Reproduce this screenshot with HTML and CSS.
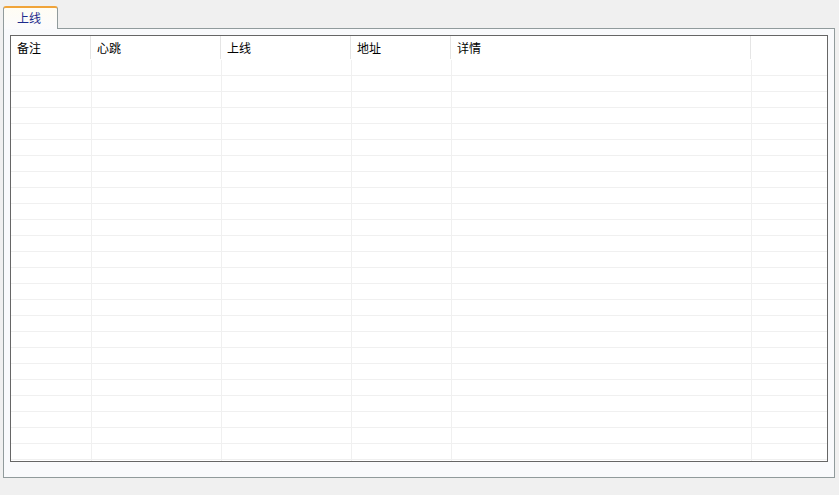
FILE: index.html
```html
<!DOCTYPE html>
<html lang="zh-CN">
<head>
  <meta charset="UTF-8">
  <title>上线</title>
  <link rel="stylesheet" href="styles.css">
</head>
<body>
  <div class="tabs">
    <div class="tab">上线</div>
  </div>

  <div class="panel">
    <div class="listview">
      <div class="header">
        <div class="col">备注</div>
        <div class="col">心跳</div>
        <div class="col">上线</div>
        <div class="col">地址</div>
        <div class="col">详情</div>
        <div class="col last"></div>
      </div>
      <!-- empty list: only the grid lines -->
      <div class="rows">
        <div class="cell"></div>
        <div class="cell"></div>
        <div class="cell"></div>
        <div class="cell"></div>
        <div class="cell"></div>
        <div class="cell last"></div>
      </div>
    </div>
  </div>
</body>
</html>
```

FILE: styles.css
```css
body {
  margin: 0;
  background: #f0f0f0;
  font-family: "Noto Sans CJK SC", "DejaVu Sans", sans-serif;
  font-size: 12px;
  color: #000;
}
.tabs {
  padding: 6px 0 0 3px;
  height: 22px;
  position: relative;
  z-index: 1;
}
.tab {
  width: 40px;
  height: 21px;
  padding-left: 13px;
  border: 1px solid #919b9c;
  border-top: 2px solid #f0a43a;
  border-bottom: none;
  border-radius: 3px 3px 0 0;
  background: linear-gradient(#fffdf4, #fbfbfd);
  color: #1c2a8c;
  line-height: 20px;
}
.panel {
  margin-left: 3px;
  width: 832px;
  height: 450px;
  border: 1px solid #919b9c;
  background: #f9fafc;
  padding: 6px 6px 15px 6px;
  box-sizing: border-box;
}
.listview {
  height: 427px;
  border: 1px solid #666;
  background: #fff;
  box-sizing: border-box;
  display: flex;
  flex-direction: column;
}
.header {
  display: grid;
  grid-template-columns: 80px 130px 130px 100px 300px 1fr;
  height: 24px;
}
.col {
  border-right: 1px solid #e5e5e5;
  height: 23px;
  padding-left: 6px;
  line-height: 24px;
}
.col.last {
  border-right: none;
}
.rows {
  flex: 1;
  display: grid;
  grid-template-columns: 81px 130px 130px 100px 300px 1fr;
  background: repeating-linear-gradient(#fff 0 15px, #f0f0f0 15px 16px);
  background-size: 100% 400px;
  background-repeat: no-repeat;
}
.cell {
  border-right: 1px solid #f0f0f0;
}
.cell.last {
  border-right: none;
}
```
